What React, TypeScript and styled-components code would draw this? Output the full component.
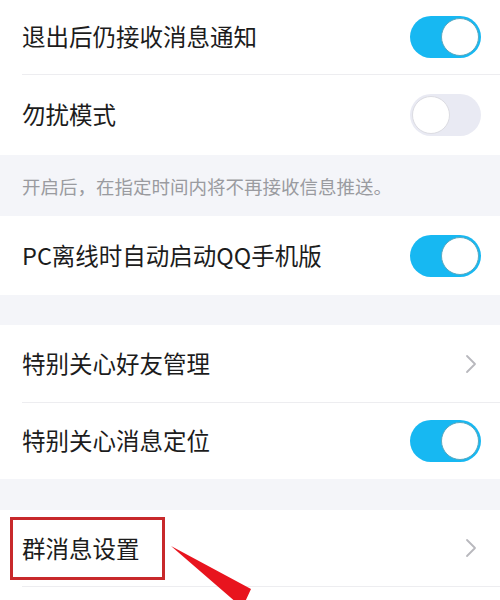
import React from "react";
import styled, { createGlobalStyle } from "styled-components";

const Global = createGlobalStyle`
  html, body { margin: 0; padding: 0; background: #ffffff; }
  body { font-family: "Noto Sans CJK SC", "Noto Sans", sans-serif; overflow: hidden; }
`;

const Page = styled.div`
  position: relative;
  width: 500px;
  height: 600px;
  overflow: hidden;
  background: #ffffff;
  display: flex;
  flex-direction: column;
`;

const Row = styled.div<{ $h: number }>`
  height: ${(p) => p.$h}px;
  flex: none;
  display: flex;
  align-items: center;
  justify-content: space-between;
  padding: 0 19px 0 22px;
  background: #ffffff;
`;

const Label = styled.span`
  font-size: 23.5px;
  color: #1c1c1c;
  letter-spacing: 0px;
  line-height: 1;
`;

const Divider = styled.div`
  height: 1px;
  flex: none;
  margin-left: 22px;
  background: #ededf0;
`;

const Gap = styled.div<{ $h: number }>`
  height: ${(p) => p.$h}px;
  flex: none;
  background: #f4f5f9;
`;

const Note = styled.div`
  height: 61px;
  flex: none;
  background: #f4f5f9;
  display: flex;
  align-items: center;
  padding: 0 22px;
  font-size: 18.5px;
  color: #9a9ba0;
`;

const Track = styled.div<{ $on: boolean }>`
  width: 71px;
  height: 42px;
  border-radius: 21px;
  box-sizing: border-box;
  background: ${(p) => (p.$on ? "#17b8f2" : "#e9eaf3")};
  display: flex;
  align-items: center;
  justify-content: ${(p) => (p.$on ? "flex-end" : "flex-start")};
  padding: 0 2px;
`;

const Knob = styled.div<{ $on: boolean }>`
  width: 38px;
  height: 38px;
  border-radius: 50%;
  box-sizing: border-box;
  background: #ffffff;
  border: 1.5px solid ${(p) => (p.$on ? "#5aa9c0" : "#dcdce2")};
`;

const Chevron = styled.span`
  display: flex;
  align-items: center;
  margin-right: 4px;
`;

const Marked = styled.span`
  display: flex;
  align-items: center;
  height: 63px;
  box-sizing: border-box;
  margin-left: -12px;
  margin-top: 1px;
  padding: 0 22px 0 9px;
  border: 3px solid #c8292b;
`;

const Arrow = styled.svg`
  position: absolute;
  left: 165px;
  top: 540px;
`;

const Toggle = ({ on }: { on: boolean }) => (
  <Track $on={on}>
    <Knob $on={on} />
  </Track>
);

const Arrow2 = () => (
  <Chevron>
    <svg width="12" height="20" viewBox="0 0 12 20">
      <path d="M2 2 L10 10 L2 18" fill="none" stroke="#b8b8bd" strokeWidth="1.8" strokeLinecap="round" strokeLinejoin="round" />
    </svg>
  </Chevron>
);

export default function App() {
  return (
    <>
      <Global />
      <Page>
        <Row $h={74}>
          <Label>退出后仍接收消息通知</Label>
          <Toggle on />
        </Row>
        <Divider />
        <Row $h={80}>
          <Label>勿扰模式</Label>
          <Toggle on={false} />
        </Row>
        <Note>开启后，在指定时间内将不再接收信息推送。</Note>
        <Row $h={79}>
          <Label>PC离线时自动启动QQ手机版</Label>
          <Toggle on />
        </Row>
        <Gap $h={30} />
        <Row $h={77}>
          <Label>特别关心好友管理</Label>
          <Arrow2 />
        </Row>
        <Divider />
        <Row $h={76}>
          <Label>特别关心消息定位</Label>
          <Toggle on />
        </Row>
        <Gap $h={31} />
        <Row $h={76}>
          <Marked>
            <Label>群消息设置</Label>
          </Marked>
          <Arrow2 />
        </Row>
        <Divider />
        <Arrow width="100" height="70" viewBox="0 0 100 70">
          <polygon points="6,6 86,49 80,62 90,60 84,70 80,70" fill="#e8141e" />
        </Arrow>
      </Page>
    </>
  );
}
